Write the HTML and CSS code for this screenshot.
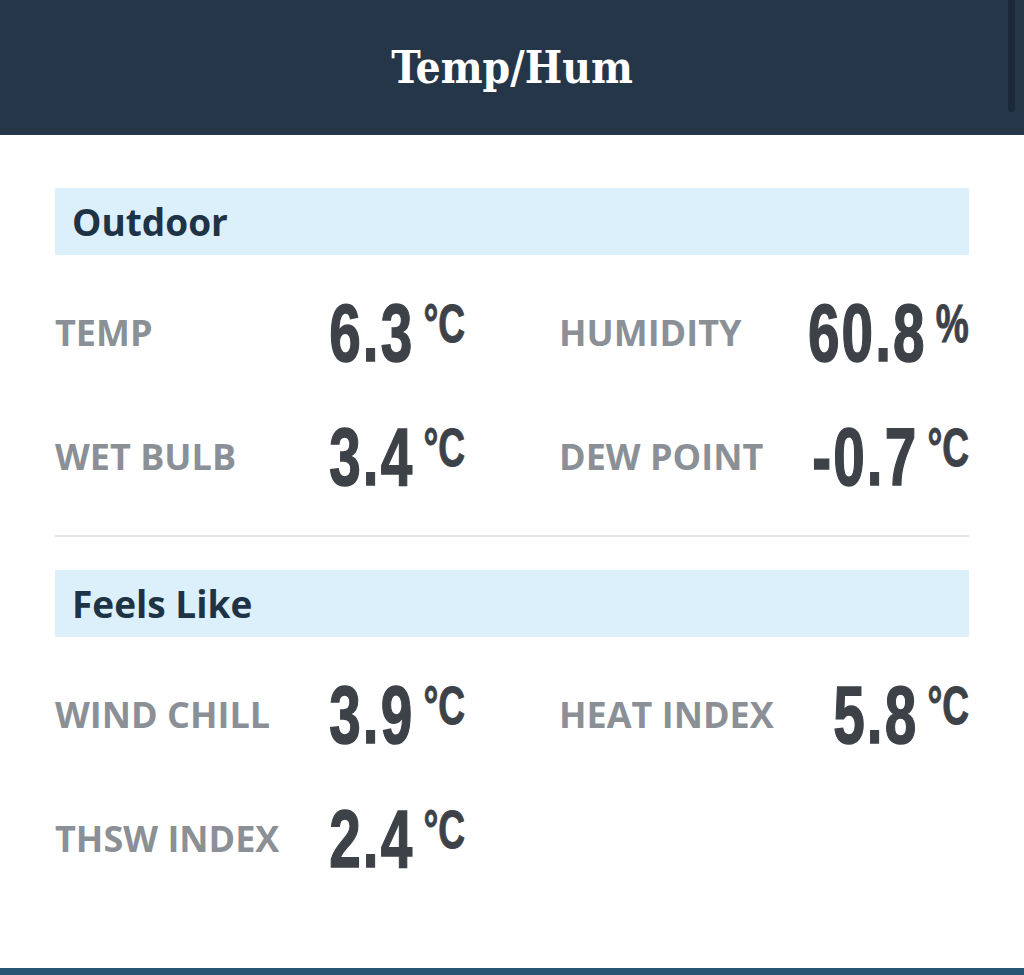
FILE: index.html
```html
<!DOCTYPE html>
<html lang="en">
<head>
<meta charset="utf-8">
<title>Temp/Hum</title>
<link rel="stylesheet" href="styles.css">
</head>
<body>
<header class="topbar">
  <h1 class="title">Temp/Hum</h1>
  <div class="scrollbar"></div>
</header>
<main class="content">
  <section class="group">
    <h2 class="group-title">Outdoor</h2>
    <div class="grid">
      <div class="cell"><span class="label">TEMP</span><span class="value"><span class="num">6.3</span><span class="unit">°C</span></span></div>
      <div class="cell"><span class="label">HUMIDITY</span><span class="value"><span class="num">60.8</span><span class="unit">%</span></span></div>
      <div class="cell"><span class="label">WET BULB</span><span class="value"><span class="num">3.4</span><span class="unit">°C</span></span></div>
      <div class="cell"><span class="label">DEW POINT</span><span class="value"><span class="num">-0.7</span><span class="unit">°C</span></span></div>
    </div>
  </section>
  <hr class="divider">
  <section class="group">
    <h2 class="group-title">Feels Like</h2>
    <div class="grid">
      <div class="cell"><span class="label">WIND CHILL</span><span class="value"><span class="num">3.9</span><span class="unit">°C</span></span></div>
      <div class="cell"><span class="label">HEAT INDEX</span><span class="value"><span class="num">5.8</span><span class="unit">°C</span></span></div>
      <div class="cell"><span class="label">THSW INDEX</span><span class="value"><span class="num">2.4</span><span class="unit">°C</span></span></div>
    </div>
  </section>
</main>
<footer class="bottombar"></footer>
</body>
</html>
```

FILE: styles.css
```css
html, body {
  margin: 0;
  padding: 0;
}
body {
  height: 975px;
  overflow: hidden;
  display: flex;
  flex-direction: column;
  background: #ffffff;
  font-family: "Open Sans", "Liberation Sans", sans-serif;
}
.topbar {
  position: relative;
  height: 135px;
  flex: 0 0 135px;
  background: #263649;
  display: flex;
  align-items: center;
  justify-content: center;
}
.title {
  margin: 0;
  font-family: "DejaVu Serif Condensed", "DejaVu Serif", serif;
  font-weight: bold;
  font-size: 44px;
  line-height: 1;
  color: #ffffff;
}
.scrollbar {
  position: absolute;
  top: 0;
  left: 1008px;
  width: 7px;
  height: 112px;
  border-radius: 0 0 4px 4px;
  background: #1b2938;
}
.content {
  flex: 1;
  padding: 53px 55px 0;
}
.group-title {
  margin: 0;
  height: 67px;
  display: flex;
  align-items: center;
  padding-left: 17px;
  background: #dcf0fb;
  color: #1f3346;
  font-size: 37px;
  font-weight: 700;
}
.grid {
  margin-top: 16px;
  display: grid;
  grid-template-columns: minmax(0, 1fr) minmax(0, 1fr);
  column-gap: 94px;
}
.cell {
  min-width: 0;
  height: 124px;
  display: flex;
  align-items: center;
  justify-content: space-between;
}
.label {
  flex: 0 1 auto;
  min-width: 0;
  white-space: nowrap;
  font-size: 36px;
  line-height: 1;
  font-weight: 700;
  color: #8b9096;
}
.value {
  flex: 0 0 auto;
  display: flex;
  align-items: flex-start;
  white-space: nowrap;
  color: #3d4248;
  font-family: "Liberation Sans", Arial, sans-serif;
  font-weight: bold;
  -webkit-text-stroke: 1.5px #3d4248;
  transform: scaleX(0.7);
  transform-origin: right center;
}
.num {
  font-size: 81px;
  line-height: 1;
  letter-spacing: 3px;
}
.unit {
  font-size: 53px;
  line-height: 1;
  margin-left: 13px;
  margin-top: 4px;
  -webkit-text-stroke: 1px #3d4248;
}
.divider {
  margin: 16px 0 33px;
  height: 2px;
  border: 0;
  background: #e3e5e7;
}
.bottombar {
  flex: 0 0 7px;
  background: #275673;
}
```
